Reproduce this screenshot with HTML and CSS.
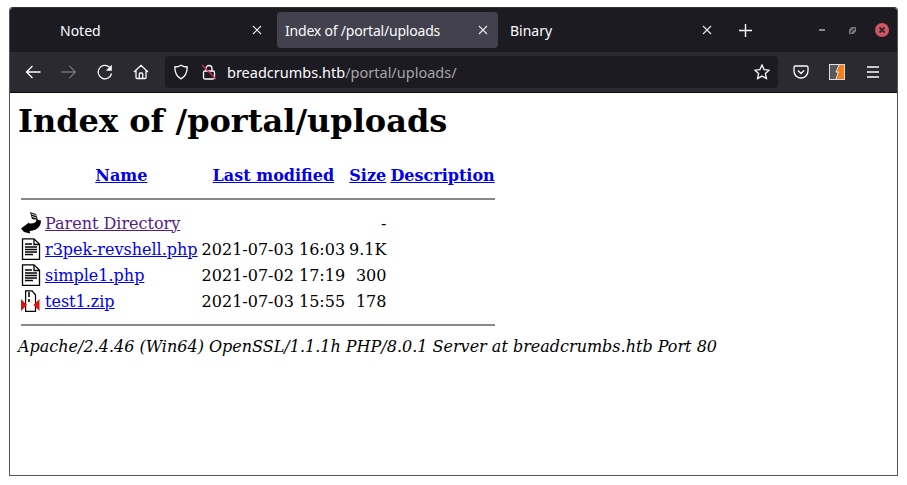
FILE: index.html
```html
<!DOCTYPE html>
<html>
<head>
<meta charset="utf-8">
<title>Index of /portal/uploads</title>
<link rel="stylesheet" href="styles.css">
</head>
<body>
<div class="window">
  <div class="tabbar">
    <div class="tab tab-first"><span class="tab-title">Noted</span><svg class="tab-x" viewBox="0 0 10 10"><path d="M1 1l8 8M9 1l-8 8"/></svg></div>
    <div class="tab tab-active"><span class="tab-title">Index of /portal/uploads</span><svg class="tab-x" viewBox="0 0 10 10"><path d="M1 1l8 8M9 1l-8 8"/></svg></div>
    <div class="tab tab-third"><span class="tab-title">Binary</span><svg class="tab-x" viewBox="0 0 10 10"><path d="M1 1l8 8M9 1l-8 8"/></svg></div>
    <svg class="newtab" viewBox="0 0 12 12"><path d="M6 0v12M0 6h12"/></svg>
    <div class="winctl">
      <span class="min"></span>
      <svg class="restore" viewBox="0 0 8 8"><path d="M0 3L3 0H8V5L5 8H0Z" fill="#77767b"/><path d="M1.500 6.500L6.500 1.500" stroke="#1c1b22" stroke-width="1.200"/></svg>
      <svg class="close" viewBox="0 0 14 14"><circle cx="7" cy="7" r="7" fill="#d2545f"/><path d="M4.500 4.500l5 5M9.500 4.500l-5 5" stroke="#2b2a33" stroke-width="1.800"/></svg>
    </div>
  </div>
  <div class="toolbar">
    <div class="navbtns">
      <svg class="ico" viewBox="0 0 16 16"><path d="M15.500 8H1.500M7.500 2L1.500 8l6 6"/></svg>
      <svg class="ico dim" viewBox="0 0 16 16"><path d="M.5 8h14M8.500 2l6 6-6 6"/></svg>
      <svg class="ico" viewBox="0 0 16 16"><path d="M14.500 9.500A6.700 6.700 0 1 1 12.500 3.200"/><path class="solid" d="M14.800 .8v6h-6z"/></svg>
      <svg class="ico" viewBox="0 0 16 16"><path d="M1 8L8 1.300 15 8M3 6.500v7a1 1 0 0 0 1 1h8a1 1 0 0 0 1-1v-7M6.300 14.500V10a1 1 0 0 1 1-1h1.400a1 1 0 0 1 1 1v4.500"/></svg>
    </div>
    <div class="urlbar">
      <svg class="ico shield" viewBox="0 0 16 16"><path d="M8 1.200C6 2.500 4 3 1.800 3c0 5.500 1.800 9.500 6.200 11.800C12.400 12.500 14.200 8.500 14.200 3 12 3 10 2.500 8 1.200z"/></svg>
      <svg class="ico lock" viewBox="0 0 16 16"><rect x="2.500" y="7" width="11" height="8" rx="1.500"/><path d="M5 7V4.500a3 3 0 0 1 6 0V7"/><path class="slash" d="M1 1l14 14"/></svg>
      <span class="url"><span class="host">breadcrumbs.htb</span><span class="path">/portal/uploads/</span></span>
      <svg class="ico star" viewBox="0 0 16 16"><path d="M8 1l2.100 4.600 5 .6-3.700 3.400 1 5L8 12.100 3.600 14.600l1-5L.9 6.200l5-.6z"/></svg>
    </div>
    <div class="rightbtns">
      <svg class="ico" viewBox="0 0 16 16"><path d="M2.500 2h11A1.500 1.500 0 0 1 15 3.500V7A7 7 0 0 1 1 7V3.500A1.500 1.500 0 0 1 2.500 2z"/><path d="M5 6.500l3 3 3-3"/></svg>
      <svg class="ext" viewBox="0 0 16 16"><rect width="16" height="16" fill="#ddd"/><rect x="1" y="1" width="14" height="14" fill="#58585c"/><path d="M10 1h5v14H7l3-6H7.500z" fill="#f57f17"/><path d="M10 1L7 8h2.500L7 15" fill="none" stroke="#eee" stroke-width="1"/></svg>
      <svg class="ico" viewBox="0 0 16 16"><path d="M2 3h12M2 8h12M2 13h12"/></svg>
    </div>
  </div>
  <div class="page">
    <h1>Index of /portal/uploads</h1>
    <table class="listing">
      <tr class="head"><th></th><th><a href="#">Name</a></th><th><a href="#">Last modified</a></th><th><a href="#">Size</a></th><th><a href="#">Description</a></th></tr>
      <tr><th class="rule" colspan="5"><hr></th></tr>
      <tr><td class="ic"><svg class="file" viewBox="0 0 20 22"><path d="M8 11.500C13 12 15.500 10.500 15.500 7.500L20 8.500C20 15 15 19 8 19Z" fill="#000"/><path d="M0 16.500L8 10.500 9 21.500 3 20Z" fill="#000"/><path d="M9 0L15 2 17 8 11 7Z" fill="#111"/><path d="M10.500 2l4.500 1.500M11 4.500l4.500 1.500" stroke="#fff" stroke-width=".8"/></svg></td><td><a class="visited" href="#">Parent Directory</a></td><td>&nbsp;</td><td class="num">-</td><td>&nbsp;</td></tr>
      <tr><td class="ic"><svg class="file" viewBox="0 0 20 22"><path d="M1.500.8H13l5.500 5.500v15H1.500z" fill="#fff" stroke="#000" stroke-width="1.300"/><path d="M13 1v5.500h5.500" fill="none" stroke="#000" stroke-width="1.300"/><path d="M4 6h7M4 9h12M4 11.500h12M4 14h12M4 16.500h8" stroke="#000" stroke-width="1.300"/></svg></td><td><a href="#">r3pek-revshell.php</a></td><td>2021-07-03 16:03</td><td class="num">9.1K</td><td>&nbsp;</td></tr>
      <tr><td class="ic"><svg class="file" viewBox="0 0 20 22"><path d="M1.500.8H13l5.500 5.500v15H1.500z" fill="#fff" stroke="#000" stroke-width="1.300"/><path d="M13 1v5.500h5.500" fill="none" stroke="#000" stroke-width="1.300"/><path d="M4 6h7M4 9h12M4 11.500h12M4 14h12M4 16.500h8" stroke="#000" stroke-width="1.300"/></svg></td><td><a href="#">simple1.php</a></td><td>2021-07-02 17:19</td><td class="num">300</td><td>&nbsp;</td></tr>
      <tr><td class="ic"><svg class="file" viewBox="0 0 20 22"><path d="M4.600.8H11l3.500 4v16.500H4.600z" fill="#fff" stroke="#000" stroke-width="1.200"/><path d="M8 2v5M8 9v3" stroke="#000" stroke-width="1.500"/><path d="M0 9l6 6-6 6zM18.500 9l-6 6 6 6z" fill="#e01010"/></svg></td><td><a href="#">test1.zip</a></td><td>2021-07-03 15:55</td><td class="num">178</td><td>&nbsp;</td></tr>
      <tr><th class="rule" colspan="5"><hr></th></tr>
    </table>
    <address>Apache/2.4.46 (Win64) OpenSSL/1.1.1h PHP/8.0.1 Server at breadcrumbs.htb Port 80</address>
  </div>
</div>
</body>
</html>
```
FILE: styles.css
```css
html, body { margin: 0; height: 100%; background: #fff; }
body { padding: 7px 9px 9px 9px; box-sizing: border-box; }
.window { width: 889px; height: 469px; display: flex; flex-direction: column; border: 1px solid #555; border-top-color: #333; box-sizing: border-box; border-radius: 4px 4px 0 0; overflow: hidden; background: #fff; }
.tabbar { height: 44px; flex: none; background: #1c1b22; display: flex; align-items: center; padding: 0 0 0 10px; font-family: "Noto Sans", sans-serif; font-size: 14px; color: #fbfbfe; }
.tab { height: 36px; display: flex; align-items: center; justify-content: space-between; box-sizing: border-box; border-radius: 4px; width: 221px; padding: 0 10px 0 8px; }
.tab-first { width: 257px; padding-left: 40px; padding-right: 15px; }
.tab-third { padding-left: 12px; width: 225px; padding-right: 11px; }
.tab-active { background: #42414d; }
.tab-active .tab-title { letter-spacing: -0.2px; }
.tab-x { width: 10px; height: 10px; fill: none; stroke: #e8e8ec; stroke-width: 1.100; }
.newtab { width: 13px; height: 13px; margin-left: 16px; fill: none; stroke: #fbfbfe; stroke-width: 1.300; }
.winctl { margin-left: auto; display: flex; align-items: center; padding-right: 8px; }
.min { width: 6px; height: 2px; background: #88878c; margin-right: 24px; }
.restore { width: 7px; height: 7px; margin-right: 19px; }
.close { width: 14px; height: 14px; }
.toolbar { flex: none; background: #2b2a33; display: flex; align-items: center; border-bottom: 1px solid #0c0c0d; box-sizing: border-box; height: 41px; }
.navbtns { display: flex; align-items: center; gap: 20px; padding-left: 15px; width: 155px; box-sizing: border-box; }
.ico { width: 16px; height: 16px; fill: none; stroke: #fbfbfe; stroke-width: 1.300; flex: none; }
.ico.dim { stroke: #6f6e75; }
.solid { fill: #fbfbfe; stroke: none; }
.urlbar { width: 613px; height: 32px; background: #1c1b22; border-radius: 4px; display: flex; align-items: center; padding: 0 8px; box-sizing: border-box; font-family: "Noto Sans", sans-serif; font-size: 14.500px; }
.shield { margin-right: 12px; }
.lock { margin-right: 10px; }
.slash { stroke: #e22850; }
.url { flex: 1; white-space: nowrap; }
.host { color: #fbfbfe; }
.path { color: #a5a4ab; }
.rightbtns { display: flex; align-items: center; gap: 20px; padding-left: 15px; }
.ext { width: 16px; height: 16px; flex: none; }
.page { flex: 1; padding: 8px; font-family: "DejaVu Serif", serif; font-size: 16px; color: #000; overflow: hidden; }
h1 { font-size: 32px; margin: 0 0 22px; line-height: 40px; font-weight: bold; }
a { color: #0000ee; }
a.visited { color: #551a8b; }
.listing { border-collapse: separate; border-spacing: 2px; }
.listing td, .listing th { padding: 1px; white-space: nowrap; }
.listing .head th { padding-bottom: 2px; }
.listing .rule { height: 20px; padding: 0 1px; }
.num { text-align: right; }
.ic { width: 20px; }
.file { display: block; width: 20px; height: 22px; }
hr { margin: 0; border: 0; border-top: 1px solid #888; border-bottom: 1px solid #888; height: 0; }
address { font-style: italic; margin-top: 0; }
```
